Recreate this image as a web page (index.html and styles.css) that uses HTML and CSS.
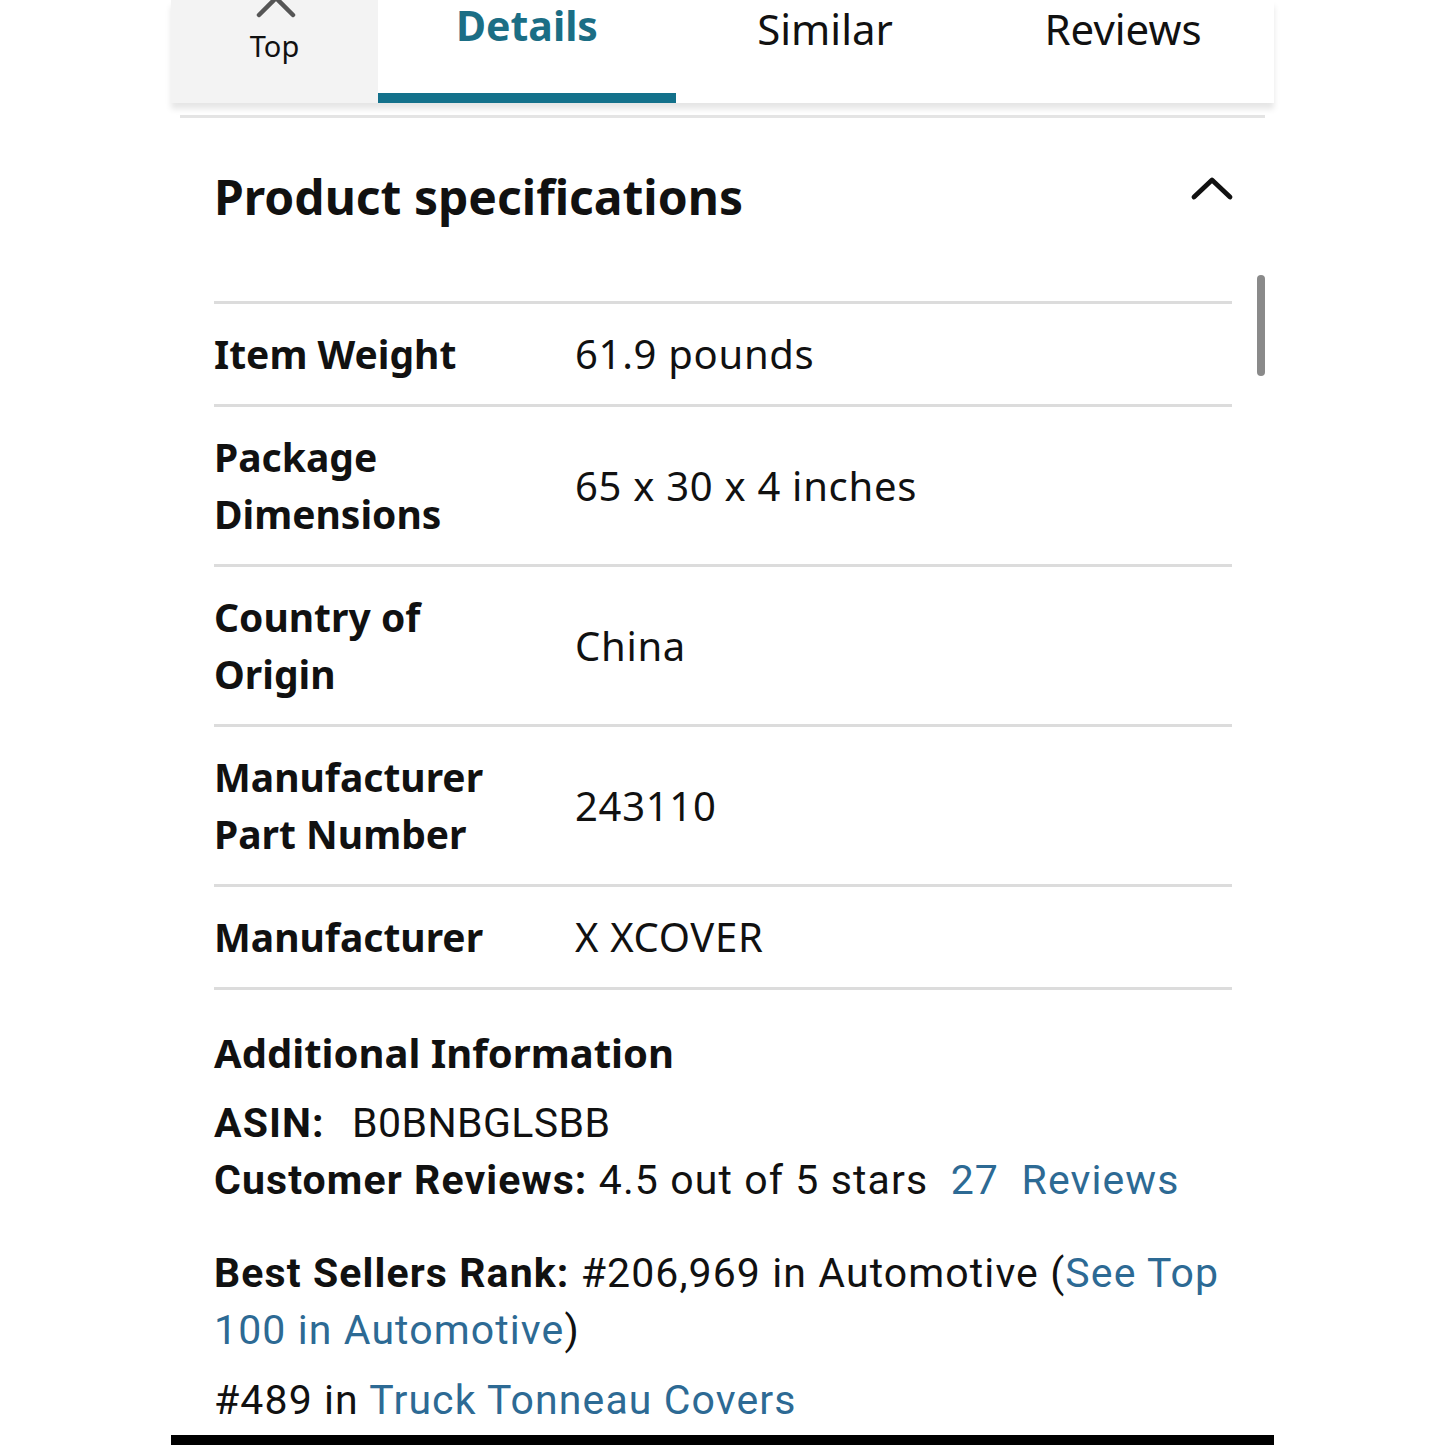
FILE: index.html
```html
<!DOCTYPE html>
<html>
<head>
<meta charset="utf-8">
<link rel="stylesheet" href="styles.css">
</head>
<body>
<div class="page">
  <div class="tabs">
    <div class="tab tab-top">
      <svg class="top-arrow" width="44" height="26" viewBox="0 0 44 26"><path d="M5 22 L22 5 L39 22" fill="none" stroke="#555" stroke-width="4.5" stroke-linecap="round" stroke-linejoin="round"/></svg>
      <span class="top-label">Top</span>
    </div>
    <div class="tab tab-active"><span>Details</span></div>
    <div class="tab"><span>Similar</span></div>
    <div class="tab"><span>Reviews</span></div>
  </div>
  <div class="tab-divider"></div>
  <div class="content">
    <div class="section-head">
      <h2>Product specifications</h2>
      <svg class="chev" width="44" height="30" viewBox="0 0 44 30"><path d="M4 25 L22 8 L40 25" fill="none" stroke="#111" stroke-width="4.8" stroke-linecap="round" stroke-linejoin="round"/></svg>
    </div>
    <div class="specs">
      <div class="row"><div class="label">Item Weight</div><div class="value">61.9 pounds</div></div>
      <div class="row"><div class="label">Package<br>Dimensions</div><div class="value">65 x 30 x 4 inches</div></div>
      <div class="row"><div class="label">Country of<br>Origin</div><div class="value">China</div></div>
      <div class="row"><div class="label">Manufacturer<br>Part Number</div><div class="value">243110</div></div>
      <div class="row"><div class="label">Manufacturer</div><div class="value">X XCOVER</div></div>
    </div>
    <h3 class="add-head">Additional Information</h3>
    <div class="info">
      <p><b>ASIN:</b> <span class="asin">B0BNBGLSBB</span></p>
      <p><b>Customer Reviews:</b> 4.5 out of 5 stars &nbsp;<a>27&nbsp; Reviews</a></p>
      <p class="rank"><b>Best Sellers Rank:</b> #206,969 in Automotive (<a>See Top<br>100 in Automotive</a>)</p>
      <p class="sub">#489 in <a>Truck Tonneau Covers</a></p>
    </div>
    <div class="scrollbar"></div>
  </div>
  <div class="bottom-bar"></div>
</div>
</body>
</html>
```

FILE: styles.css
```css
html, body {
  margin: 0;
  padding: 0;
  background: #fff;
}
body {
  font-family: "Noto Sans", "Open Sans", sans-serif;
  color: #111;
  height: 1445px;
  overflow: hidden;
}
.page {
  width: 1103px;
  margin-left: 171px;
  position: relative;
  height: 1445px;
  display: flex;
  flex-direction: column;
}
.tabs {
  display: flex;
  height: 103px;
  background: #fff;
  box-shadow: 0 6px 6px rgba(0,0,0,0.10);
  position: relative;
  z-index: 1;
}
.tab {
  flex: 0 0 298px;
  display: flex;
  justify-content: center;
  align-items: flex-start;
  font-size: 42px;
  line-height: 42px;
  padding-top: 8px;
  box-sizing: border-box;
  color: #111;
}
.tab-top {
  flex: 0 0 207px;
  background: #f3f3f3;
  flex-direction: column;
  justify-content: flex-start;
  align-items: center;
  padding-top: 0;
}
.top-arrow {
  margin-top: -7px;
  margin-left: 3px;
}
.top-label {
  font-size: 29px;
  line-height: 29px;
  margin-top: 12px;
  color: #111;
}
.tab-active {
  color: #1b6e85;
  font-weight: 700;
  font-size: 41px;
  line-height: 41px;
  border-bottom: 10px solid #13718b;
  padding-top: 5px;
}
.tab-divider {
  height: 3px;
  background: #e4e4e4;
  margin: 12px 9px 0 9px;
}
.content {
  padding: 0 42px 0 43px;
  position: relative;
  flex: 1;
}
.section-head {
  display: flex;
  justify-content: space-between;
  align-items: flex-start;
  height: 183px;
  box-sizing: border-box;
  padding-top: 50px;
}
.section-head h2 {
  margin: 0;
  font-size: 48px;
  line-height: 57px;
  font-weight: 700;
}
.chev {
  margin-top: 4px;
  margin-right: -2px;
}
.specs {
  border-top: 3px solid #dcdcdc;
}
.row {
  display: flex;
  align-items: center;
  border-bottom: 3px solid #dcdcdc;
  padding: 21px 0 22px 0;
  line-height: 57px;
}
.label {
  flex: 0 0 361px;
  font-weight: 700;
  font-size: 39px;
}
.value {
  flex: 1;
  font-size: 40px;
  letter-spacing: 0.7px;
}
.add-head {
  margin: 34px 0 0 0;
  font-size: 40px;
  font-weight: 700;
  line-height: 57px;
}
.info {
  font-family: Roboto, "Noto Sans", sans-serif;
  font-size: 41px;
  letter-spacing: 1.1px;
  margin-top: 14px;
}
.info p {
  margin: 0;
  line-height: 57px;
}
.info b {
  font-weight: 700;
}
.info .asin {
  margin-left: 16px;
  letter-spacing: 0.4px;
}
.info a {
  color: #2d6a94;
}
.info .rank {
  margin-top: 36px;
}
.info .sub {
  margin-top: 13px;
}
.scrollbar {
  position: absolute;
  right: 9px;
  top: 157px;
  width: 8px;
  height: 101px;
  border-radius: 4px;
  background: #8a8a8a;
}
.bottom-bar {
  position: absolute;
  left: 0;
  right: 0;
  top: 1435px;
  height: 10px;
  background: #000;
}
```
